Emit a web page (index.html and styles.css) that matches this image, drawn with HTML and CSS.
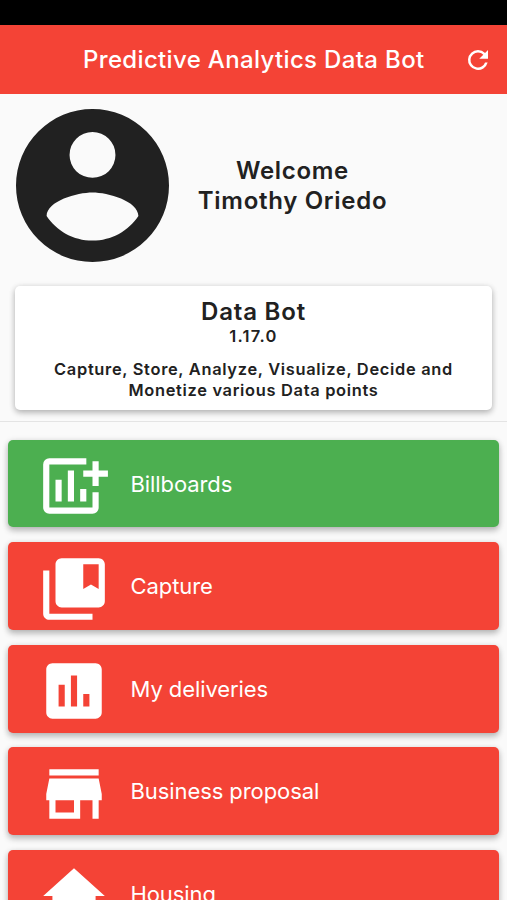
FILE: index.html
```html
<!DOCTYPE html>
<html lang="en">
<head>
<meta charset="utf-8">
<title>Predictive Analytics Data Bot</title>
<link rel="stylesheet" href="styles.css">
</head>
<body>
<div class="status-bar"></div>
<header class="app-bar">
  <h1 class="app-title">Predictive Analytics Data Bot</h1>
  <svg class="refresh" viewBox="0 0 24 24"><path d="M17.65 6.35A7.96 7.96 0 0 0 12 4a8 8 0 1 0 7.73 10h-2.08A6 6 0 1 1 12 6c1.66 0 3.14.69 4.22 1.78L13 11h7V4z"/></svg>
</header>
<section class="profile">
  <svg class="avatar" viewBox="2 2 20 20"><path fill-rule="evenodd" d="M12 2a10 10 0 1 0 0 20 10 10 0 0 0 0-20zm0 3a3 3 0 1 1 0 6 3 3 0 0 1 0-6zm0 14.2c-2.5 0-4.71-1.28-6-3.22.03-1.99 4-3.08 6-3.08 1.99 0 5.97 1.09 6 3.08-1.29 1.94-3.5 3.22-6 3.22z"/></svg>
  <div class="welcome">Welcome<br>Timothy Oriedo</div>
</section>
<section class="card">
  <h2 class="card-title">Data Bot</h2>
  <div class="version">1.17.0</div>
  <p class="tagline">Capture, Store, Analyze, Visualize, Decide and<br>Monetize various Data points</p>
</section>
<nav class="menu">
  <a class="tile tile-green">
    <svg class="icon" viewBox="0 0 24 24"><path d="M16 3v2H4v14h14v-5h2v5a2 2 0 0 1-2 2H4a2 2 0 0 1-2-2V5a2 2 0 0 1 2-2zM6 10h2v7H6zM10 7h2v10h-2zM14 13h2v4h-2zM18 4h2v3h3v2h-3v3h-2V9h-3V7h3z"/></svg>
    <span class="label">Billboards</span>
  </a>
  <a class="tile">
    <svg class="icon" viewBox="0 0 24 24"><path d="M4 6H2v14c0 1.1.9 2 2 2h14v-2H4zM20 2H8c-1.1 0-2 .9-2 2v12c0 1.1.9 2 2 2h12c1.1 0 2-.9 2-2V4c0-1.1-.9-2-2-2zm0 10l-2.5-1.5L15 12V4h5z"/></svg>
    <span class="label">Capture</span>
  </a>
  <a class="tile">
    <svg class="icon" viewBox="0 0 24 24"><path d="M19 3H5c-1.1 0-2 .9-2 2v14c0 1.1.9 2 2 2h14c1.1 0 2-.9 2-2V5c0-1.1-.9-2-2-2zM9 17H7v-7h2zm4 0h-2V7h2zm4 0h-2v-4h2z"/></svg>
    <span class="label">My deliveries</span>
  </a>
  <a class="tile">
    <svg class="icon" viewBox="0 0 24 24"><path d="M20 4H4v2h16zm1 10v-2l-1-5H4l-1 5v2h1v6h10v-6h4v6h2v-6zm-9 4H6v-4h6z"/></svg>
    <span class="label">Business proposal</span>
  </a>
  <a class="tile">
    <svg class="icon" viewBox="0 0 24 24"><path d="M10 20v-6h4v6h5v-8h3L12 3 2 12h3v8z"/></svg>
    <span class="label">Housing</span>
  </a>
</nav>
</body>
</html>
```
FILE: styles.css
```css
* { box-sizing: border-box; }
html, body { height: 900px; overflow: hidden; }
body {
  margin: 0;
  background: #fafafa;
  color: #212121;
  font-family: Inter, Roboto, sans-serif;
}
svg { display: block; flex: none; }
.status-bar { height: 25px; background: #000; }
.app-bar {
  height: 69px;
  display: flex;
  align-items: center;
  justify-content: space-between;
  padding: 0 14px 0 83px;
  background: #f44336;
  color: #fff;
}
.app-title {
  margin: 0;
  font-size: 24px;
  font-weight: 500;
  line-height: 30px;
  letter-spacing: .34px;
  white-space: nowrap;
}
.refresh { width: 30px; height: 30px; fill: #fff; }
.profile {
  height: 192px;
  display: flex;
  padding: 15px 16px;
}
.avatar { width: 153px; height: 153px; fill: #212121; }
.welcome {
  width: 247px;
  padding-top: 47px;
  text-align: center;
  font-size: 24px;
  font-weight: 600;
  line-height: 29.5px;
  letter-spacing: .7px;
  white-space: nowrap;
}
.card {
  height: 124px;
  margin: 0 15px;
  padding-top: 11px;
  border-radius: 5px;
  background: #fff;
  box-shadow: 0 3px 6px rgba(0, 0, 0, .2), 0 1px 6px rgba(0, 0, 0, .14);
  text-align: center;
}
.card-title {
  margin: 0;
  font-size: 24px;
  font-weight: 600;
  line-height: 30px;
  letter-spacing: .8px;
}
.version {
  margin-top: -1px;
  font-size: 16.5px;
  font-weight: 600;
  line-height: 20px;
  letter-spacing: 1.25px;
}
.tagline {
  margin: 13px 0 0;
  font-size: 16.4px;
  font-weight: 600;
  line-height: 21px;
  letter-spacing: .7px;
  white-space: nowrap;
}
.menu {
  margin-top: 11px;
  padding: 17.6px 8px 0;
  border-top: 1px solid #e4e4e4;
  display: flex;
  flex-direction: column;
  gap: 14.8px;
}
.tile {
  height: 87.8px;
  flex: none;
  display: flex;
  align-items: flex-start;
  padding: 9.5px 0 0 28.9px;
  border-radius: 5px;
  background: #f44336;
  box-shadow: 0 4px 6px rgba(0, 0, 0, .2), 0 1px 6px rgba(0, 0, 0, .14);
  color: #fff;
}
.tile-green { background: #4caf50; }
.icon { width: 74px; height: 74px; fill: #fff; }
.label {
  margin: 19.5px 0 0 19.6px;
  font-size: 22px;
  line-height: 30px;
  letter-spacing: -.08px;
  white-space: nowrap;
}
```
